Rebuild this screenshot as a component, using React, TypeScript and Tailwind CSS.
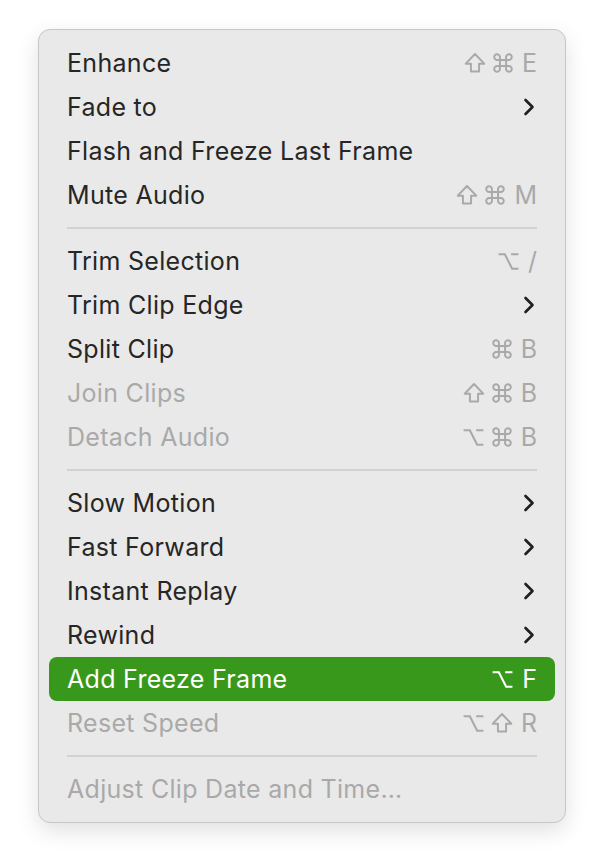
import React from "react";

type Item = {
  label: string;
  keys?: string[];
  submenu?: boolean;
  disabled?: boolean;
  active?: boolean;
};

const groups: Item[][] = [
  [
    { label: "Enhance", keys: ["shift", "cmd", "E"] },
    { label: "Fade to", submenu: true },
    { label: "Flash and Freeze Last Frame" },
    { label: "Mute Audio", keys: ["shift", "cmd", "M"] },
  ],
  [
    { label: "Trim Selection", keys: ["opt", "/"] },
    { label: "Trim Clip Edge", submenu: true },
    { label: "Split Clip", keys: ["cmd", "B"] },
    { label: "Join Clips", keys: ["shift", "cmd", "B"], disabled: true },
    { label: "Detach Audio", keys: ["opt", "cmd", "B"], disabled: true },
  ],
  [
    { label: "Slow Motion", submenu: true },
    { label: "Fast Forward", submenu: true },
    { label: "Instant Replay", submenu: true },
    { label: "Rewind", submenu: true },
    { label: "Add Freeze Frame", keys: ["opt", "F"], active: true },
    { label: "Reset Speed", keys: ["opt", "shift", "R"], disabled: true },
  ],
  [{ label: "Adjust Clip Date and Time…", disabled: true }],
];

const Chevron = () => (
  <svg width="14" height="20" viewBox="0 0 14 20" className="mr-[1px]">
    <path d="M3.5 3 L10.5 10 L3.5 17" fill="none" stroke="#1f1f1f" strokeWidth="2.6" strokeLinecap="round" strokeLinejoin="round" />
  </svg>
);

// modifier glyphs drawn like the macOS menu symbols
const KeyGlyph: React.FC<{ k: string; color: string }> = ({ k, color }) => {
  if (k === "shift")
    return (
      <svg width="22" height="22" viewBox="0 0 20 20">
        <path d="M10 1.8 L18.4 10.6 H13.7 V17.8 H6.3 V10.6 H1.6 Z" fill="none" stroke={color} strokeWidth="1.8" strokeLinejoin="round" />
      </svg>
    );
  if (k === "cmd")
    return (
      <svg width="22" height="22" viewBox="0 0 20 20">
        <path
          d="M7.2 7.2 V5 A2.6 2.6 0 1 0 5 7.2 H15 A2.6 2.6 0 1 0 12.8 5 V15 A2.6 2.6 0 1 0 15 12.8 H5 A2.6 2.6 0 1 0 7.2 15 Z"
          fill="none"
          stroke={color}
          strokeWidth="1.8"
          strokeLinejoin="round"
        />
      </svg>
    );
  if (k === "opt")
    return (
      <svg width="23" height="21" viewBox="0 0 22 20">
        <path d="M1.5 3 H7.5 L14.5 17 H20.5 M13.5 3 H20.5" fill="none" stroke={color} strokeWidth="2" strokeLinejoin="miter" />
      </svg>
    );
  return <span className="text-[25px] leading-none ml-[2px]">{k}</span>;
};

const Row: React.FC<{ item: Item }> = ({ item }) => {
  const textColor = item.active ? "text-white" : item.disabled ? "text-[#a9a9a9]" : "text-[#262626]";
  const keyHex = item.active ? "#ffffff" : "#a9a9a9";
  return (
    <div
      className={`h-[44px] flex items-center justify-between px-[18px] rounded-[8px] ${
        item.active ? "bg-[#38981b]" : ""
      }`}
    >
      <span className={`text-[25px] leading-none tracking-[0.3px] ${textColor}`}>{item.label}</span>
      {item.submenu && <Chevron />}
      {item.keys && (
        <span className={`flex items-center gap-[6px] ${item.active ? "text-white" : "text-[#a9a9a9]"}`}>
          {item.keys.map((k, i) => (
            <KeyGlyph key={i} k={k} color={keyHex} />
          ))}
        </span>
      )}
    </div>
  );
};

export default function App() {
  return (
    <div className="w-[604px] h-[866px] bg-white pt-[29px] pl-[38px] font-['Inter','Liberation_Sans',sans-serif]">
      <div className="w-[528px] rounded-[12px] bg-[#e9e9e9] border border-[#c6c6c6] px-[10px] py-[11px] shadow-[0_8px_22px_rgba(0,0,0,0.12)]">
        {groups.map((g, gi) => (
          <div key={gi}>
            {gi > 0 && <div className="mx-[18px] my-[10px] h-[2px] bg-[#d2d2d2]" />}
            {g.map((item) => (
              <Row key={item.label} item={item} />
            ))}
          </div>
        ))}
      </div>
    </div>
  );
}
